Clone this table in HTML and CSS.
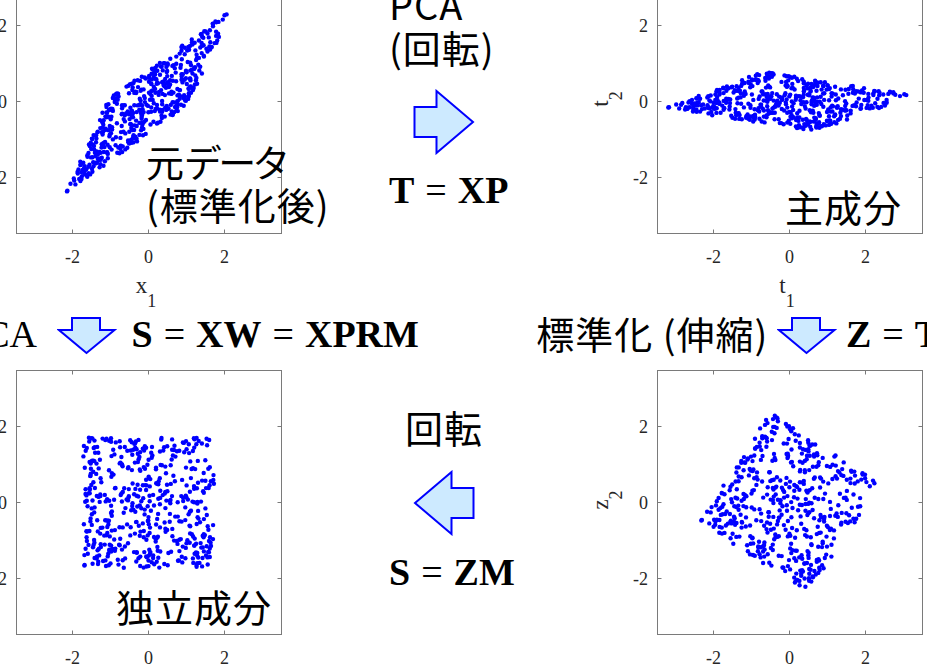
FILE: index.html
```html
<!DOCTYPE html>
<html lang="ja">
<head>
<meta charset="utf-8">
<title>PCA と ICA</title>
<link rel="stylesheet" href="styles.css">
</head>
<body>
<div class="figure">

  <div class="cell plot">
    <svg class="axes" width="332" height="345" viewBox="0 0 332 345">
      <rect class="box" x="65.5" y="5.5" width="265" height="264"/>
      <path class="ticks" d="M121.5 5.5v4M197.5 5.5v4M273.5 5.5v4M121.5 269.5v-4M197.5 269.5v-4M273.5 269.5v-4M65.5 61.5h4M65.5 137.5h4M65.5 213.5h4M330.5 61.5h-4M330.5 137.5h-4M330.5 213.5h-4"/>
      <g class="dots" data-set="x"></g>
      <text class="tl" x="56" y="68" text-anchor="end">2</text>
      <text class="tl" x="56" y="144" text-anchor="end">0</text>
      <text class="tl" x="56" y="220" text-anchor="end">-2</text>
      <text class="tl" x="121.5" y="299" text-anchor="middle">-2</text>
      <text class="tl" x="197.5" y="299" text-anchor="middle">0</text>
      <text class="tl" x="273.5" y="299" text-anchor="middle">2</text>
      <text class="al" x="195" y="329" text-anchor="middle">x<tspan class="sub" dy="14">1</tspan></text>
    </svg>
    <div class="tag tag-x">元<span class="kana">データ</span><br>(標準化後)</div>
  </div>

  <div class="cell mid mid-top">
    <div class="cap">PCA<br>(回転)</div>
    <svg class="arrow arrow-side" width="64" height="66" viewBox="0 0 64 66">
      <polygon points="2.5,18 24.5,18 24.5,2 61,33 24.5,64 24.5,48 2.5,48"/>
    </svg>
    <div class="eq eq-t"><b>T</b> <span class="op">=</span> <b>XP</b></div>
  </div>

  <div class="cell plot">
    <svg class="axes" width="332" height="345" viewBox="0 0 332 345">
      <rect class="box" x="65.5" y="5.5" width="265" height="264"/>
      <path class="ticks" d="M121.5 5.5v4M197.5 5.5v4M273.5 5.5v4M121.5 269.5v-4M197.5 269.5v-4M273.5 269.5v-4M65.5 61.5h4M65.5 137.5h4M65.5 213.5h4M330.5 61.5h-4M330.5 137.5h-4M330.5 213.5h-4"/>
      <g class="dots" data-set="t"></g>
      <text class="tl" x="56" y="68" text-anchor="end">2</text>
      <text class="tl" x="56" y="144" text-anchor="end">0</text>
      <text class="tl" x="56" y="220" text-anchor="end">-2</text>
      <text class="tl" x="121.5" y="299" text-anchor="middle">-2</text>
      <text class="tl" x="197.5" y="299" text-anchor="middle">0</text>
      <text class="tl" x="273.5" y="299" text-anchor="middle">2</text>
      <text class="al" x="195" y="329" text-anchor="middle">t<tspan class="sub" dy="14">1</tspan></text>
      <text class="al" transform="translate(16 135) rotate(-90)" text-anchor="middle">t<tspan class="sub" dy="14">2</tspan></text>
    </svg>
    <div class="tag tag-t">主成分</div>
  </div>

  <div class="mid-row">
    <div class="eq ica">ICA</div>
    <svg class="arrow arrow-down" width="60" height="39" viewBox="0 0 60 39">
      <polygon points="15,2 43,2 43,14 57.5,14 29.5,37 2,14 15,14"/>
    </svg>
    <div class="eq eq-s"><b>S</b> <span class="op">=</span> <b>XW</b> <span class="op">=</span> <b>XPRM</b></div>
    <div class="std">標準化 (伸縮)</div>
    <svg class="arrow arrow-down" width="60" height="39" viewBox="0 0 60 39">
      <polygon points="15,2 43,2 43,14 57.5,14 29.5,37 2,14 15,14"/>
    </svg>
    <div class="eq eq-z"><b>Z</b> <span class="op">=</span> <b>T</b></div>
  </div>

  <div class="cell plot">
    <svg class="axes" width="332" height="305" viewBox="0 0 332 305">
      <rect class="box" x="65.5" y="5.5" width="265" height="264"/>
      <path class="ticks" d="M121.5 5.5v4M197.5 5.5v4M273.5 5.5v4M121.5 269.5v-4M197.5 269.5v-4M273.5 269.5v-4M65.5 61.5h4M65.5 137.5h4M65.5 213.5h4M330.5 61.5h-4M330.5 137.5h-4M330.5 213.5h-4"/>
      <g class="dots" data-set="s"></g>
      <text class="tl" x="56" y="68" text-anchor="end">2</text>
      <text class="tl" x="56" y="144" text-anchor="end">0</text>
      <text class="tl" x="56" y="220" text-anchor="end">-2</text>
      <text class="tl" x="121.5" y="299" text-anchor="middle">-2</text>
      <text class="tl" x="197.5" y="299" text-anchor="middle">0</text>
      <text class="tl" x="273.5" y="299" text-anchor="middle">2</text>
    </svg>
    <div class="tag tag-s">独立成分</div>
  </div>

  <div class="cell mid mid-bottom">
    <div class="cap cap-rot">回転</div>
    <svg class="arrow arrow-side" width="64" height="66" viewBox="0 0 64 66">
      <polygon points="61.5,18 39.5,18 39.5,2 3,33 39.5,64 39.5,48 61.5,48"/>
    </svg>
    <div class="eq eq-zm"><b>S</b> <span class="op">=</span> <b>ZM</b></div>
  </div>

  <div class="cell plot">
    <svg class="axes" width="332" height="305" viewBox="0 0 332 305">
      <rect class="box" x="65.5" y="5.5" width="265" height="264"/>
      <path class="ticks" d="M121.5 5.5v4M197.5 5.5v4M273.5 5.5v4M121.5 269.5v-4M197.5 269.5v-4M273.5 269.5v-4M65.5 61.5h4M65.5 137.5h4M65.5 213.5h4M330.5 61.5h-4M330.5 137.5h-4M330.5 213.5h-4"/>
      <g class="dots" data-set="z"></g>
      <text class="tl" x="56" y="68" text-anchor="end">2</text>
      <text class="tl" x="56" y="144" text-anchor="end">0</text>
      <text class="tl" x="56" y="220" text-anchor="end">-2</text>
      <text class="tl" x="121.5" y="299" text-anchor="middle">-2</text>
      <text class="tl" x="197.5" y="299" text-anchor="middle">0</text>
      <text class="tl" x="273.5" y="299" text-anchor="middle">2</text>
      <text class="al" transform="translate(16 135) rotate(-90)" text-anchor="middle">z<tspan class="sub" dy="14">2</tspan></text>
    </svg>
  </div>

</div>
<script src="script.js"></script>
</body>
</html>
```

FILE: styles.css
```css
html, body {
  margin: 0;
  padding: 0;
  background: #ffffff;
  overflow: hidden;
}

body {
  width: 927px;
  height: 670px;
}

.figure {
  display: grid;
  grid-template-columns: 330px 311px 335px;
  grid-template-rows: 345px 56px 305px;
  width: 976px;
  margin: -36px 0 0 -49px;
}

.cell {
  position: relative;
}

.axes {
  display: block;
  overflow: visible;
}

.box {
  fill: none;
  stroke: #7a7a7a;
  stroke-width: 1;
}

.ticks {
  fill: none;
  stroke: #7a7a7a;
  stroke-width: 1;
}

.dots {
  fill: #0000ff;
}

.tl {
  font-family: "Liberation Serif", serif;
  font-size: 18px;
  fill: #262626;
}

.al {
  font-family: "Liberation Serif", serif;
  font-size: 23px;
  fill: #262626;
}

.sub {
  font-size: 18px;
}

.tag {
  position: absolute;
  font-family: "Noto Sans CJK JP", sans-serif;
  font-size: 38px;
  line-height: 43px;
  letter-spacing: 1px;
  color: #000000;
  white-space: nowrap;
}

.kana {
  font-feature-settings: "palt";
  letter-spacing: -2px;
}

.tag-x {
  left: 195px;
  top: 175px;
}

.tag-t {
  left: 193px;
  top: 220px;
}

.tag-s {
  left: 165px;
  top: 219px;
}

.mid {
  display: flex;
  flex-direction: column;
  align-items: flex-start;
  padding-left: 108px;
}

.cap {
  font-family: "Noto Sans CJK JP", sans-serif;
  font-size: 38px;
  line-height: 43px;
  letter-spacing: 1px;
  color: #000000;
  white-space: nowrap;
}

.mid-top .cap {
  margin-top: 18px;
}

.cap-rot {
  margin-top: 40px;
  margin-left: 16px;
}

.arrow {
  display: block;
  flex-shrink: 0;
}

.arrow polygon {
  fill: #cdeaff;
  stroke: #0000ff;
  stroke-width: 2;
  stroke-linejoin: miter;
}

.arrow-side {
  margin-left: 23px;
}

.mid-top .arrow-side {
  margin-top: 21px;
}

.mid-bottom .arrow-side {
  margin-top: 22px;
}

.eq {
  font-family: "Liberation Serif", serif;
  font-size: 38px;
  line-height: 42px;
  color: #000000;
  white-space: nowrap;
  flex-shrink: 0;
}

.eq b {
  font-weight: 700;
}

.op {
  padding: 0 1.5px;
}

.eq-t {
  margin-top: 14px;
}

.eq-zm {
  margin-top: 15px;
}

.mid-row {
  grid-column: 1 / -1;
  display: flex;
  align-items: flex-start;
}

.mid-row .eq {
  margin-top: 4px;
}

.mid-row .arrow-down {
  margin-top: 6.5px;
}

.ica {
  box-sizing: border-box;
  width: 105.5px;
  padding-right: 19.5px;
  text-align: right;
}

.eq-s {
  margin-left: 15px;
}

.std {
  box-sizing: border-box;
  flex-shrink: 0;
  width: 358.5px;
  padding-right: 9px;
  margin-top: 2px;
  text-align: right;
  font-family: "Noto Sans CJK JP", sans-serif;
  font-size: 38px;
  line-height: 43px;
  letter-spacing: 1px;
  color: #000000;
  white-space: nowrap;
}

.eq-z {
  margin-left: 8.5px;
}
```

FILE: script.js
```js
(function () {
  function mulberry32(seed) {
    return function () {
      seed |= 0;
      seed = (seed + 0x6D2B79F5) | 0;
      var t = Math.imul(seed ^ (seed >>> 15), 1 | seed);
      t = (t + Math.imul(t ^ (t >>> 7), 61 | t)) ^ t;
      return ((t ^ (t >>> 14)) >>> 0) / 4294967296;
    };
  }

  var rand = mulberry32(20240611);
  var N = 500;
  var R3 = Math.sqrt(3);
  var th = -33 * Math.PI / 180;
  var c = Math.cos(th), s = Math.sin(th);
  var sets = { x: [], t: [], z: [], s: [] };

  for (var i = 0; i < N; i++) {
    var s1 = (rand() * 2 - 1) * R3;
    var s2 = (rand() * 2 - 1) * R3;
    var z1 = c * s1 - s * s2;
    var z2 = s * s1 + c * s2;
    var t1 = 1.375 * z1;
    var t2 = 0.332 * z2;
    var x1 = (t1 - t2) / Math.SQRT2;
    var x2 = (t1 + t2) / Math.SQRT2;
    sets.s.push([s1, s2]);
    sets.z.push([z1, z2]);
    sets.t.push([t1, t2]);
    sets.x.push([x1, x2]);
  }

  var NS = "http://www.w3.org/2000/svg";
  var groups = document.querySelectorAll(".dots");
  for (var g = 0; g < groups.length; g++) {
    var grp = groups[g];
    var data = sets[grp.getAttribute("data-set")];
    for (var k = 0; k < data.length; k++) {
      var dot = document.createElementNS(NS, "circle");
      dot.setAttribute("cx", (197.5 + data[k][0] * 37.75).toFixed(1));
      dot.setAttribute("cy", (137.5 - data[k][1] * 37.75).toFixed(1));
      dot.setAttribute("r", "2.2");
      grp.appendChild(dot);
    }
  }
})();
```
